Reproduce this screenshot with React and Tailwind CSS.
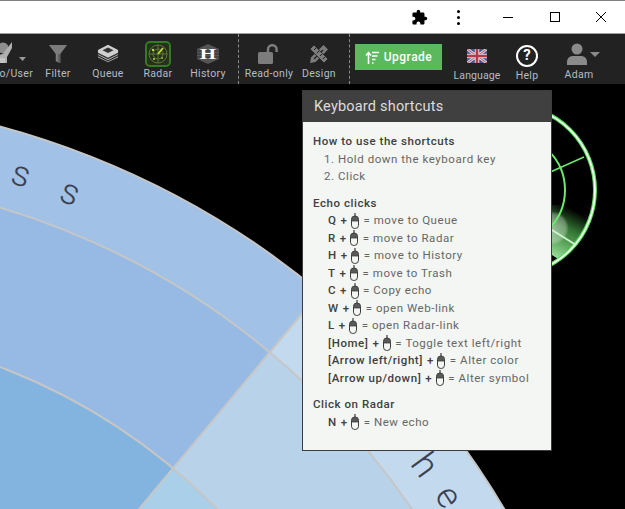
import { MdExtension } from "react-icons/md";

const echoRows = [
  ["Q", "move to Queue"],
  ["R", "move to Radar"],
  ["H", "move to History"],
  ["T", "move to Trash"],
  ["C", "Copy echo"],
  ["W", "open Web-link"],
  ["L", "open Radar-link"],
  ["[Home]", "Toggle text left/right"],
  ["[Arrow left/right]", "Alter color"],
  ["[Arrow up/down]", "Alter symbol"],
];

function MouseIcon() {
  return (
    <svg width="8" height="16" viewBox="0 0 8 16" className="mx-[3.500px] shrink-0">
      <path d="M4 0v5" stroke="#3c3c3c" strokeWidth="1.200" />
      <path d="M4 3C1.800 3 .5 4.500 .5 6.500V8h7V6.500C7.500 4.500 6.200 3 4 3z" fill="#5a5a5a" />
      <rect x=".5" y="3" width="7" height="12.500" rx="3.300" fill="none" stroke="#3c3c3c" strokeWidth="1" />
      <path d="M.5 8h7" stroke="#3c3c3c" strokeWidth="0.800" />
    </svg>
  );
}

function ShortcutRow({ keyName, action }) {
  return (
    <div className="flex h-[17.5px] items-center pl-[15px]">
      <span className="font-medium text-[#404040]">{keyName}</span>
      <span className="ml-[4px] font-medium text-[#404040]">+</span>
      <MouseIcon />
      <span className="ml-[1px]">= {action}</span>
    </div>
  );
}

function ToolItem({ label, children }) {
  return (
    <div className="flex w-[50px] shrink-0 flex-col items-center">
      <div className="flex h-[27px] items-center justify-center">{children}</div>
      <span className="whitespace-nowrap text-[10.5px] leading-[14px] tracking-[0.3px] text-[#b4bcc6]">{label}</span>
    </div>
  );
}

function Caret() {
  return <div className="h-0 w-0 border-x-[5px] border-t-[5px] border-x-transparent border-t-[#8a8a8a]" />;
}

function Toolbar() {
  return (
    <div className="flex h-[50px] shrink-0 items-start overflow-hidden bg-[#222222] pt-[6px]">
      <div className="flex w-[33px] shrink-0 justify-end overflow-hidden">
        <div className="flex shrink-0 flex-col items-end">
          <div className="h-[27px] w-[33px]">
            <svg width="33" height="27" viewBox="0 0 33 27">
              <circle cx="3" cy="8" r="5.500" fill="#8e8e8e" />
              <path d="M-4 23c0-6 3-9 7-9l2-3 7-9v6l-5 9v6z" fill="#b0b0b0" />
              <path d="M-4 23h9v-5H-4z" fill="#c4c4c4" />
              <path d="M19 17h7l-3.500 4z" fill="#9a9a9a" />
            </svg>
          </div>
          <span className="whitespace-nowrap text-[10.5px] leading-[14px] tracking-[0.3px] text-[#b4bcc6]">Echo/User</span>
        </div>
      </div>

      <ToolItem label="Filter">
        <svg width="20" height="20" viewBox="0 0 22 22">
          <path d="M1 1h20l-7.500 10v10l-5-2v-8z" fill="#7c7c7c" />
          <path d="M11 11v9l2.500 1V11z" fill="#5f5f5f" />
        </svg>
      </ToolItem>

      <ToolItem label="Queue">
        <svg width="22" height="20" viewBox="0 0 24 20">
          <path d="M12 0l11 5.500v3L12 14 1 8.500v-3z" fill="#d0d0d0" />
          <path d="M12 3L6 5.800l6 3 6-3z" fill="#333333" />
          <path d="M1 10l11 5.500L23 10v1.200l-11 5.500L1 11.200z" fill="#b0b0b0" />
          <path d="M1 12.500l11 5.300 11-5.300v1.200L12 19 1 13.700z" fill="#9a9a9a" />
        </svg>
      </ToolItem>

      <ToolItem label="Radar">
        <div className="flex h-[26px] w-[26px] items-center justify-center rounded-[5px] border-2 border-[#2f7d1c] bg-[#26301f]">
          <svg width="20" height="20" viewBox="0 0 20 20" fill="none" stroke="#5c7a32" strokeWidth="1">
            <circle cx="10" cy="10" r="9" />
            <circle cx="10" cy="10" r="5" />
            <path d="M1 10h18M10 1v18" />
            <path d="M10 10l5-6" stroke="#c2dc2e" strokeWidth="1.800" />
            <circle cx="5" cy="6" r="1.200" fill="#c2dc2e" stroke="none" />
            <circle cx="6" cy="15" r="1" fill="#c2dc2e" stroke="none" />
            <circle cx="14" cy="14" r="1" fill="#9ab82a" stroke="none" />
          </svg>
        </div>
      </ToolItem>

      <ToolItem label="History">
        <svg width="22" height="20" viewBox="0 0 22 20">
          <path d="M11 0l11 5v10l-11 5L0 15V5z" fill="#555555" />
          <path d="M0 7h22M0 10h22M0 13h22" stroke="#333333" strokeWidth="1" />
          <text x="0" y="0" textAnchor="middle" transform="translate(11 15) scale(1.350 1)" fontFamily="Liberation Serif, serif" fontWeight="700" fontSize="15.500" fill="#ffffff">H</text>
        </svg>
      </ToolItem>

      <div className="mx-[5px] -mt-[6px] h-[50px] w-0 shrink-0 border-l border-dashed border-[#8a8a8a]" />

      <ToolItem label="Read-only">
        <svg width="24" height="20" viewBox="0 0 24 20">
          <rect x="1" y="8" width="15" height="12" rx="1.500" fill="#7c7c7c" />
          <path d="M11 8V5.500a4.300 4.300 0 0 1 8.600 0V8" fill="none" stroke="#7c7c7c" strokeWidth="2.500" />
        </svg>
      </ToolItem>

      <ToolItem label="Design">
        <svg width="20" height="20" viewBox="0 0 20 20">
          <path d="M14.500 1l4.500 4.500L6.500 18 1 19l1-5.500z" fill="#7c7c7c" />
          <path d="M14 6l-9 9" stroke="#222222" strokeWidth="1.200" />
          <path d="M1 5l4-4 14 14-4 4z" fill="#7c7c7c" stroke="#222222" strokeWidth="0.800" />
          <path d="M5 6l2-2M8 9l2-2M11 12l2-2M14 15l2-2" stroke="#222222" strokeWidth="1" />
        </svg>
      </ToolItem>

      <div className="ml-[5px] -mt-[6px] h-[50px] w-0 shrink-0 border-l border-dashed border-[#8a8a8a]" />

      <div className="ml-[5px] mt-[4px] flex h-[26px] w-[87px] shrink-0 items-center justify-center gap-[5px] bg-[#5cb85c] text-[12px] font-medium tracking-[0.5px] text-white">
        <svg width="14" height="13" viewBox="0 0 14 13" fill="none" stroke="#ffffff" strokeWidth="1.500">
          <path d="M3.500 13V2M1 4.500l2.500-3 2.500 3" />
          <path d="M7 1.500h7M7 5h5.500M7 8.500h3.500M7 12h1.500" />
        </svg>
        Upgrade
      </div>

      <div className="ml-[10px] flex w-[50px] shrink-0 flex-col items-center">
        <div className="mt-[2px] flex h-[27px] items-center justify-center">
          <svg width="20" height="14" viewBox="0 0 20 14">
            <rect width="20" height="14" fill="#49508a" />
            <path d="M0 0l20 14M20 0L0 14" stroke="#d6d6e0" strokeWidth="3" />
            <path d="M0 0l20 14M20 0L0 14" stroke="#b8485a" strokeWidth="1" />
            <path d="M10 0v14M0 7h20" stroke="#d6d6e0" strokeWidth="4.500" />
            <path d="M10 0v14M0 7h20" stroke="#b8384a" strokeWidth="2.500" />
          </svg>
        </div>
        <span className="whitespace-nowrap text-[10.5px] leading-[14px] tracking-[0.1px] text-[#b4bcc6]">Language</span>
      </div>

      <div className="flex w-[50px] shrink-0 flex-col items-center">
        <div className="mt-[2px] flex h-[27px] items-center justify-center">
          <div className="flex h-[22px] w-[22px] items-center justify-center rounded-full border-2 border-white text-[15px] font-bold leading-none text-white">?</div>
        </div>
        <span className="whitespace-nowrap text-[10.5px] leading-[14px] tracking-[0.3px] text-[#b4bcc6]">Help</span>
      </div>

      <div className="ml-[2px] flex w-[50px] shrink-0 flex-col items-center">
        <div className="mt-[1px] flex h-[27px] items-center gap-[3px] pl-[9px]">
          <svg width="20" height="23" viewBox="0 0 20 23" className="-mt-[1px]">
            <circle cx="10" cy="6" r="5.500" fill="#8a8a8a" />
            <path d="M0 22v-3c0-4 3-6 6-6h8c3 0 6 2 6 6v3z" fill="#8a8a8a" />
          </svg>
          <Caret />
        </div>
        <span className="whitespace-nowrap text-[10.5px] leading-[14px] tracking-[0.3px] text-[#b4bcc6]">Adam</span>
      </div>
    </div>
  );
}

function RadarCanvas() {
  const cx = -217;
  const cy = 936;
  return (
    <svg viewBox="0 84 625 425" className="absolute inset-0 h-full w-full">
      <defs>
        <clipPath id="leftSector">
          <path d="M-217 936L420 172V-100H-300V936z" />
        </clipPath>
        <clipPath id="rightSector">
          <path d="M-217 936L420 172H1000V1000H-217z" />
        </clipPath>
        <clipPath id="miniRadar">
          <path d="M545 205H600V270H575L552 255H545z" />
        </clipPath>
        <linearGradient id="sweep" gradientUnits="userSpaceOnUse" x1="578" y1="212" x2="553" y2="262">
          <stop offset="0" stopColor="#5fd65f" stopOpacity="0" />
          <stop offset="0.35" stopColor="#5fd65f" stopOpacity="0.55" />
          <stop offset="1" stopColor="#b0f2b0" stopOpacity="1" />
        </linearGradient>
        <radialGradient id="blob">
          <stop offset="0" stopColor="#ffffff" stopOpacity="0.45" />
          <stop offset="0.8" stopColor="#ffffff" stopOpacity="0.3" />
          <stop offset="1" stopColor="#ffffff" stopOpacity="0" />
        </radialGradient>
      </defs>

      {/* small radar behind the panel */}
      <g clipPath="url(#miniRadar)">
        <circle cx="510" cy="190" r="85" fill="url(#sweep)" />
      </g>
      <circle cx="552" cy="228" r="17" fill="url(#blob)" />
      <circle cx="510" cy="190" r="85" fill="none" stroke="#5ad85a" strokeWidth="4" />
      <circle cx="510" cy="190" r="85" fill="none" stroke="#f4fff4" strokeWidth="1.800" />
      <circle cx="510" cy="190" r="55" fill="none" stroke="#6ee86e" strokeWidth="2" />
      <path d="M510 190L584 157" stroke="#6ee86e" strokeWidth="1.500" />
      <path d="M552 230L576 245" stroke="#d0f8d0" strokeWidth="1.500" />

      <g clipPath="url(#leftSector)">
        <circle cx={cx} cy={cy} r="838" fill="#a1c1e6" />
        <circle cx={cx} cy={cy} r="760" fill="#96bae3" />
        <circle cx={cx} cy={cy} r="609" fill="#83b4e0" />
      </g>
      <g clipPath="url(#rightSector)">
        <circle cx={cx} cy={cy} r="838" fill="#c3d9ee" />
        <circle cx={cx} cy={cy} r="760" fill="#b8d3e9" />
        <circle cx={cx} cy={cy} r="609" fill="#aacfe8" />
      </g>
      <g fill="none" stroke="#c6c6c6" strokeWidth="2">
        <circle cx={cx} cy={cy} r="838" />
        <circle cx={cx} cy={cy} r="760" />
        <circle cx={cx} cy={cy} r="609" />
        <path d="M-217 936L320 292" />
      </g>

      <g className="fill-[#3a4150] text-[36px] font-light">
        <text x="21" y="186" textAnchor="middle" transform="rotate(17 21 175)">s</text>
        <text x="70" y="204" textAnchor="middle" transform="rotate(21 70 193)">s</text>
        <text x="425" y="477" textAnchor="middle" transform="rotate(54 425 465)">h</text>
        <text x="448" y="508" textAnchor="middle" transform="rotate(57 448 497)">e</text>
      </g>
    </svg>
  );
}

function ShortcutsPanel() {
  return (
    <div className="absolute left-[302px] top-[6px] h-[361px] w-[250px] border border-[#3c3c3c] bg-[#f4f6f3] text-[11.5px] leading-[17.5px] tracking-[0.55px] text-[#666666]">
      <div className="flex h-[31px] items-center bg-[#404040] pl-[11px] pt-[1px] text-[14.5px] tracking-[0.2px] text-[#dcdcdc]">Keyboard shortcuts</div>
      <div className="pl-[10px] pt-[11px]">
        <h3 className="font-medium text-[#404040]">How to use the shortcuts</h3>
        <div className="pl-[11px]">1. Hold down the keyboard key</div>
        <div className="pl-[11px]">2. Click</div>

        <h3 className="mt-[9px] font-medium text-[#404040]">Echo clicks</h3>
        {echoRows.map(([keyName, action]) => <ShortcutRow key={keyName} keyName={keyName} action={action} />)}

        <h3 className="mt-[9px] font-medium text-[#404040]">Click on Radar</h3>
        <ShortcutRow keyName="N" action="New echo" />
      </div>
    </div>
  );
}

export default function App() {
  return (
    <div className="flex h-[509px] w-[625px] flex-col overflow-hidden bg-black font-[Roboto,sans-serif]">
      <div className="flex h-[34px] shrink-0 items-center border-y border-t-[#808080] border-b-[#a0a0a0] bg-white text-black">
        <MdExtension className="ml-[411px] h-[17px] w-[17px]" />
        <div className="ml-[29px] flex flex-col gap-[3px]">
          <div className="h-[3px] w-[3px] rounded-full bg-black" />
          <div className="h-[3px] w-[3px] rounded-full bg-black" />
          <div className="h-[3px] w-[3px] rounded-full bg-black" />
        </div>
        <div className="ml-[43px] h-px w-[10px] bg-black" />
        <div className="ml-[37px] h-[10px] w-[10px] border border-black" />
        <svg width="10" height="10" viewBox="0 0 10 10" className="ml-[36px]" stroke="#000" strokeWidth="1">
          <path d="M0 0l10 10M10 0L0 10" />
        </svg>
      </div>
      <Toolbar />
      <div className="relative flex-1">
        <RadarCanvas />
        <ShortcutsPanel />
      </div>
    </div>
  );
}
